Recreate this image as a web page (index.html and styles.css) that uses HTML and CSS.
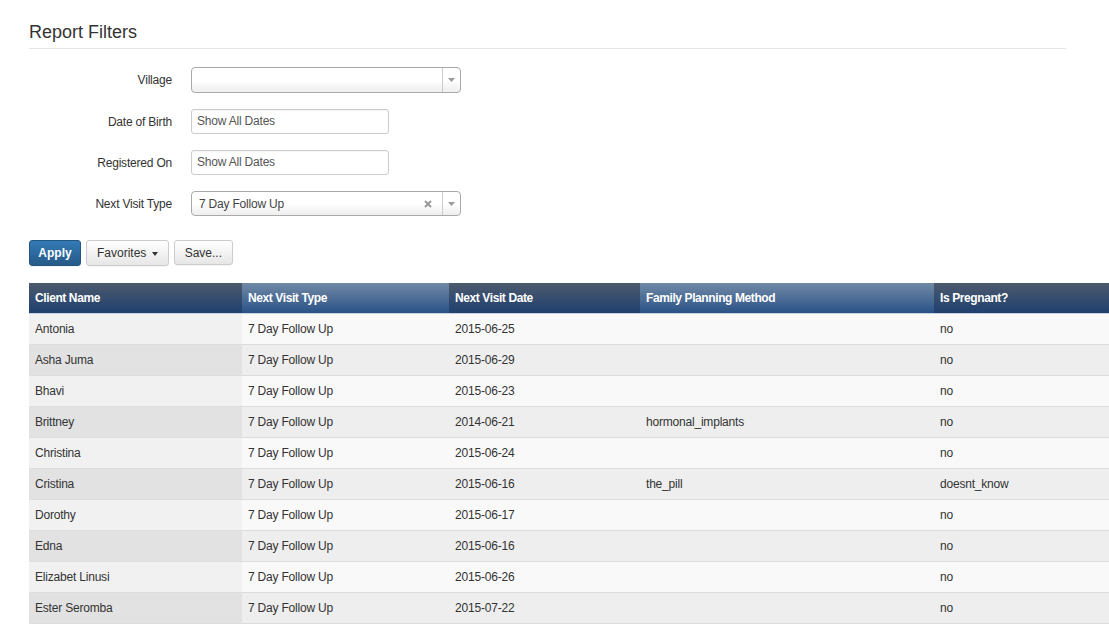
FILE: index.html
```html
<!DOCTYPE html>
<html>
<head>
<meta charset="utf-8">
<link rel="stylesheet" href="styles.css">
</head>
<body>
<div class="page">
  <h1 class="title">Report Filters</h1>
  <div class="filters">
    <div class="frow">
      <label class="flabel">Village</label>
      <div class="select wide">
        <span class="sval"></span>
        <span class="sarrow"><svg width="7" height="4" viewBox="0 0 7 4"><path d="M0 0h7L3.5 4z" fill="#999"/></svg></span>
      </div>
    </div>
    <div class="frow">
      <label class="flabel">Date of Birth</label>
      <div class="input">Show All Dates</div>
    </div>
    <div class="frow">
      <label class="flabel">Registered On</label>
      <div class="input">Show All Dates</div>
    </div>
    <div class="frow">
      <label class="flabel">Next Visit Type</label>
      <div class="select wide">
        <span class="sval">7 Day Follow Up</span>
        <span class="sclear"><svg width="8" height="8" viewBox="0 0 8 8"><path d="M1 1L7 7M7 1L1 7" stroke="#999" stroke-width="2"/></svg></span>
        <span class="sarrow"><svg width="7" height="4" viewBox="0 0 7 4"><path d="M0 0h7L3.5 4z" fill="#999"/></svg></span>
      </div>
    </div>
  </div>
  <div class="actions">
    <button class="btn btn-primary">Apply</button>
    <button class="btn">Favorites <span class="caret"></span></button>
    <button class="btn">Save...</button>
  </div>
  <table class="report">
    <thead>
      <tr>
        <th class="c1">Client Name</th>
        <th class="c2 hl">Next Visit Type</th>
        <th class="c3">Next Visit Date</th>
        <th class="c4 hl">Family Planning Method</th>
        <th class="c5">Is Pregnant?</th>
      </tr>
    </thead>
    <tbody>
      <tr><td>Antonia</td><td>7 Day Follow Up</td><td>2015-06-25</td><td></td><td>no</td></tr>
      <tr><td>Asha Juma</td><td>7 Day Follow Up</td><td>2015-06-29</td><td></td><td>no</td></tr>
      <tr><td>Bhavi</td><td>7 Day Follow Up</td><td>2015-06-23</td><td></td><td>no</td></tr>
      <tr><td>Brittney</td><td>7 Day Follow Up</td><td>2014-06-21</td><td>hormonal_implants</td><td>no</td></tr>
      <tr><td>Christina</td><td>7 Day Follow Up</td><td>2015-06-24</td><td></td><td>no</td></tr>
      <tr><td>Cristina</td><td>7 Day Follow Up</td><td>2015-06-16</td><td>the_pill</td><td>doesnt_know</td></tr>
      <tr><td>Dorothy</td><td>7 Day Follow Up</td><td>2015-06-17</td><td></td><td>no</td></tr>
      <tr><td>Edna</td><td>7 Day Follow Up</td><td>2015-06-16</td><td></td><td>no</td></tr>
      <tr><td>Elizabet Linusi</td><td>7 Day Follow Up</td><td>2015-06-26</td><td></td><td>no</td></tr>
      <tr><td>Ester Seromba</td><td>7 Day Follow Up</td><td>2015-07-22</td><td></td><td>no</td></tr>
    </tbody>
  </table>
</div>
</body>
</html>
```

FILE: styles.css
```css
html, body {
  margin: 0;
  padding: 0;
  background: #fff;
  overflow: hidden;
}
body {
  font-family: "Liberation Sans", Arial, sans-serif;
  font-size: 12px;
  color: #333;
}
.page {
  padding: 20px 0 0 29px;
}
.title {
  margin: 0;
  width: 1037px;
  font-size: 18px;
  font-weight: normal;
  color: #333;
  line-height: 24px;
  padding-bottom: 4px;
  border-bottom: 1px solid #e5e5e5;
}
.filters {
  margin-top: 18px;
  display: flex;
  flex-direction: column;
  gap: 16px;
}
.frow {
  display: flex;
  align-items: center;
  gap: 19px;
  height: 25px;
}
.frow:first-child {
  height: 26px;
}
.flabel {
  width: 143px;
  text-align: right;
  color: #333;
  letter-spacing: -0.2px;
}
.input {
  box-sizing: border-box;
  width: 198px;
  height: 25px;
  border: 1px solid #ccc;
  border-radius: 3px;
  padding: 0 5px;
  line-height: 23px;
  color: #555;
  letter-spacing: -0.2px;
  box-shadow: inset 0 1px 1px rgba(0,0,0,0.04);
}
.select {
  box-sizing: border-box;
  width: 270px;
  height: 25px;
  border: 1px solid #aaa;
  border-radius: 4px;
  background: linear-gradient(#fff 0%, #fff 50%, #eee 100%);
  display: flex;
  align-items: center;
  position: relative;
}
.frow:first-child .select {
  height: 26px;
}
.sval {
  flex: 1;
  padding-left: 7px;
  color: #444;
  letter-spacing: -0.2px;
}
.sclear {
  width: 16px;
  display: flex;
  align-items: center;
  justify-content: center;
  margin-right: 6px;
}
.sarrow {
  width: 17px;
  height: 100%;
  border-left: 1px solid #ccc;
  display: flex;
  align-items: center;
  justify-content: center;
}
.actions {
  margin-top: 24px;
  display: flex;
  gap: 5px;
  align-items: flex-start;
}
.btn {
  font-family: "Liberation Sans", Arial, sans-serif;
  font-size: 12px;
  height: 26px;
  padding: 0 10px;
  border: 1px solid #ccc;
  border-radius: 3px;
  background: linear-gradient(#fff, #e6e6e6);
  color: #333;
  box-shadow: 0 1px 1px rgba(0,0,0,0.05);
}
.btn:nth-child(3) {
  height: 25px;
}
.btn-primary {
  width: 52px;
  padding: 0;
  color: #fff;
  font-weight: bold;
  border-color: #245580;
  background: linear-gradient(#337ab7, #265a88);
}
.caret {
  display: inline-block;
  width: 0;
  height: 0;
  margin-left: 2px;
  vertical-align: middle;
  border-top: 4px solid #333;
  border-left: 3px solid transparent;
  border-right: 3px solid transparent;
}
.report {
  margin-top: 17px;
  border-collapse: collapse;
  table-layout: fixed;
  width: 1080px;
}
.report th {
  height: 30px;
  padding: 0 6px;
  text-align: left;
  color: #fff;
  font-weight: bold;
  font-size: 12px;
  letter-spacing: -0.4px;
  background: linear-gradient(#4c5a6c, #1f4070);
  border-bottom: 1px solid #c9d1dc;
}
.report th.hl {
  background: linear-gradient(#7189a6, #2a5286);
}
.c1 { width: 201px; }
.c2 { width: 195px; }
.c3 { width: 179px; }
.c4 { width: 282px; }
.c5 { width: 163px; }
.report td {
  height: 30px;
  padding: 0 6px;
  border-bottom: 1px solid #ddd;
  background: #f9f9f9;
  color: #333;
  white-space: nowrap;
  letter-spacing: -0.2px;
}
.report td:first-child {
  background: #f1f1f1;
}
.report tbody tr:nth-child(even) td {
  background: #eee;
}
.report tbody tr:nth-child(even) td:first-child {
  background: #e2e2e2;
}
```
